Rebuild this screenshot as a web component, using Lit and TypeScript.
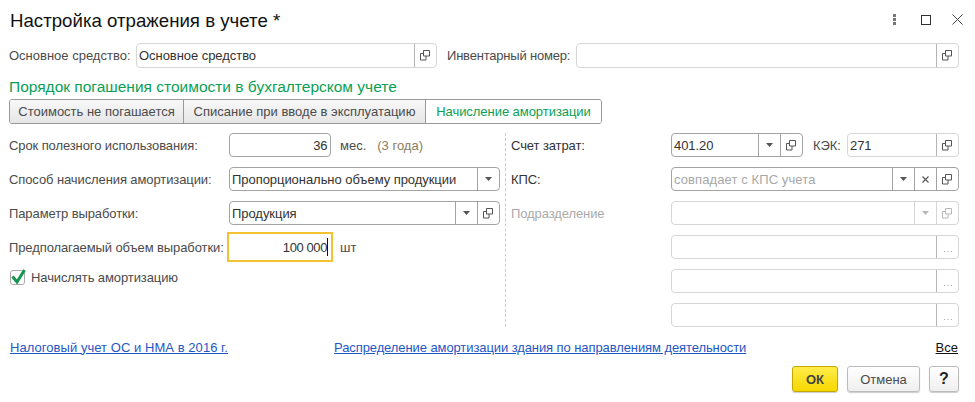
import { LitElement, html, css, svg } from "lit";
import { customElement } from "lit/decorators.js";

type Btn = "open" | "drop" | "clear" | "dots";

const openIcon = svg`<svg class="ic" width="11" height="11" viewBox="0 0 11 11"><path d="M3.5 .5h6v5.5h-6z M.5 3.5h3 M.5 3.5v6.5 M.5 10h5.500v-4" fill="none" stroke="currentColor"/></svg>`;
const dropIcon = svg`<svg class="ic" width="7" height="4" viewBox="0 0 7 4"><path d="M0 0h7L3.500 4z" fill="currentColor"/></svg>`;
const clearIcon = svg`<svg class="ic" width="7" height="7" viewBox="0 0 7 7"><path d="M.5 .5l6 6M6.500 .5l-6 6" fill="none" stroke="currentColor" stroke-width="1.100"/></svg>`;
const dotsIcon = svg`<svg class="ic low" width="8" height="1" viewBox="0 0 8 1"><path d="M0 0h1v1H0zM3.500 0h1v1h-1zM7 0h1v1H7z" fill="currentColor"/></svg>`;
const icons: Record<Btn, unknown> = { open: openIcon, drop: dropIcon, clear: clearIcon, dots: dotsIcon };

@customElement("app-root")
export class AppRoot extends LitElement {
  static styles = css`
    :host {
      display: block;
      width: 975px;
      height: 402px;
      background: #fff;
      overflow: hidden;
      font-family: "Liberation Sans", Arial, sans-serif;
      font-size: 13px;
      color: #4b4b4b;
    }
    .root { display: flex; flex-direction: column; padding: 0 16px 0 9px; }
    .titlebar { display: flex; align-items: center; height: 43px; }
    .title { font-size: 18.67px; color: #111; margin-left: 1px; flex: 1; position: relative; top: -1px; }
    .winbtns { display: flex; align-items: center; margin-right: -4px; height: 10px; position: relative; top: -2px; }
    .winbtns svg { display: block; }
    .wb-dots { margin-right: 25px; }
    .wb-max { margin-right: 21px; }
    .row { display: flex; align-items: center; height: 25px; }
    .lbl { white-space: nowrap; letter-spacing: -0.1px; }
    .l-main { width: 127px; flex: none; letter-spacing: 0; }
    .l-inv { width: 129px; flex: none; margin-left: 10px; letter-spacing: -0.2px; }
    .heading { color: #0a9f55; font-size: 15.5px; height: 31px; line-height: 37px; white-space: nowrap; }
    .tabs {
      display: flex; width: 593px; height: 25px; box-sizing: border-box;
      border: 1px solid #999; border-radius: 3px; overflow: hidden;
    }
    .tab {
      display: flex; align-items: center; justify-content: center; box-sizing: border-box;
      background: linear-gradient(#f8f8f8, #e6e6e6); border-right: 1px solid #999; white-space: nowrap;
    }
    .tab.t1 { width: 174px; }
    .tab.t2 { width: 242px; }
    .tab.on { flex: 1; background: #fff; border-right: 0; color: #0a9f55; letter-spacing: -0.05px; }
    .form { display: flex; margin-top: 9px; }
    .left, .right { display: grid; grid-auto-rows: 24px; row-gap: 10px; align-items: center; }
    .left { width: 496px; grid-template-columns: 220px 271px; }
    .right { width: 454px; box-sizing: border-box; padding-left: 5px; border-left: 1px dashed #ccc; grid-template-columns: 160px 288px; }
    .cell { display: flex; align-items: center; }
    .span { grid-column: 1 / -1; }
    .field {
      position: relative; display: flex; box-sizing: border-box; height: 24px; flex: none;
      background: #fff; border: 1px solid #a3a3a3; border-radius: 4px; color: #333;
    }
    .field.tall { height: 25px; }
    .field.light { border-color: #d6d6d6; }
    .field.light .b { border-left-color: #b5b5b5; }
    .field.faded .b { border-left-color: #d6d6d6; color: #b8b8b8; }
    .field.focus { border-color: transparent; border-radius: 0; }
    .field.focus::after {
      content: ""; position: absolute; inset: -4px -3px; border: 2px solid #f2c230; pointer-events: none;
    }
    .val { flex: 1; min-width: 0; padding: 0 2px; display: flex; align-items: center; white-space: nowrap; letter-spacing: -0.05px; }
    .val.end { justify-content: flex-end; padding-right: 3px; letter-spacing: -0.4px; }
    .focus .val.end { padding-right: 2px; }
    .val.ph { color: #a8a8a8; letter-spacing: 0.1px; }
    .caret { display: inline-block; width: 1px; height: 18px; background: #111; margin-left: 0; }
    .b {
      flex: none; width: 21px; display: flex; align-items: center; justify-content: center;
      border-left: 1px solid #a3a3a3; color: #555;
    }
    .b .low { margin-top: 9px; color: #aaa; }
    .w-main { width: 301px; }
    .w-inv { width: 383px; }
    .w-term { width: 102px; }
    .w-full { width: 271px; }
    .w-acc { width: 132px; }
    .w-kek { width: 112px; }
    .w-r { width: 288px; }
    .unit { margin-left: 9px; }
    .note { margin-left: 11px; color: #8a7d62; }
    .l-kek { flex: none; width: 34px; margin-left: 10px; }
    .dis { color: #aaa; }
    .dark { color: #333; }
    .check { display: flex; align-items: center; gap: 6px; margin-left: 1px; position: relative; top: -4px; letter-spacing: -0.1px; }
    .box {
      position: relative; box-sizing: border-box; width: 15px; height: 15px;
      border: 1px solid #aaa; border-radius: 3px; background: #fff;
    }
    .box svg { position: absolute; left: 0; top: -3px; overflow: visible; }
    .links { display: flex; align-items: center; height: 20px; margin-top: 10px; padding-left: 1px; }
    a { color: #1f57c3; text-decoration: underline; white-space: nowrap; }
    .lk1 { letter-spacing: 0.05px; }
    .lk2 { margin-left: 106px; letter-spacing: -0.09px; }
    .all { margin-left: auto; margin-right: 1px; color: #111; }
    .actions { display: flex; justify-content: flex-end; gap: 9px; margin-top: 9px; }
    .btn {
      display: flex; align-items: center; justify-content: center; box-sizing: border-box; height: 26px;
      border: 1px solid #bcbcbc; border-radius: 3px; background: linear-gradient(#fff, #efefef);
      box-shadow: 0 1px 1px #ccc;
    }
    .ok { width: 46px; background: linear-gradient(#ffec4a, #f6d800); border-color: #c0a800; font-weight: 700; color: #444; }
    .cancel { width: 73px; }
    .help { width: 30px; font-weight: 700; font-size: 16px; color: #222; }
  `;

  private field(cls: string, value: string, buttons: Btn[], valCls = "") {
    return html`<div class="field ${cls}">
      <div class="val ${valCls}">${value}${cls.includes("focus") ? html`<span class="caret"></span>` : ""}</div>
      ${buttons.map((b) => html`<div class="b">${icons[b]}</div>`)}
    </div>`;
  }

  render() {
    return html`<div class="root">
      <div class="titlebar">
        <div class="title">Настройка отражения в учете *</div>
        <div class="winbtns">
          <svg class="wb-dots" width="3" height="11" viewBox="0 0 3 11"><path d="M0 0h3v3H0zM0 4h3v3H0zM0 8h3v3H0z" fill="#777"/></svg>
          <svg class="wb-max" width="10" height="10" viewBox="0 0 10 10"><rect x=".5" y=".5" width="9" height="9" fill="none" stroke="#333"/></svg>
          <svg width="11" height="11" viewBox="0 0 11 11"><path d="M.5 .5l10 10M10.500 .5l-10 10" fill="none" stroke="#444"/></svg>
        </div>
      </div>
      <div class="row">
        <div class="lbl l-main">Основное средство:</div>
        ${this.field("tall light w-main", "Основное средство", ["open"])}
        <div class="lbl l-inv">Инвентарный номер:</div>
        ${this.field("tall light w-inv", "", ["open"])}
      </div>
      <div class="heading">Порядок погашения стоимости в бухгалтерском учете</div>
      <div class="tabs">
        <div class="tab t1">Стоимость не погашается</div>
        <div class="tab t2">Списание при вводе в эксплуатацию</div>
        <div class="tab on">Начисление амортизации</div>
      </div>
      <div class="form">
        <div class="left">
          <div class="lbl">Срок полезного использования:</div>
          <div class="cell">
            ${this.field("w-term", "36", [], "end")}
            <span class="unit">мес.</span><span class="note">(3 года)</span>
          </div>
          <div class="lbl">Способ начисления амортизации:</div>
          <div class="cell">${this.field("w-full", "Пропорционально объему продукции", ["drop"])}</div>
          <div class="lbl">Параметр выработки:</div>
          <div class="cell">${this.field("w-full", "Продукция", ["drop", "open"])}</div>
          <div class="lbl">Предполагаемый объем выработки:</div>
          <div class="cell">
            ${this.field("w-term focus", "100 000", [], "end")}
            <span class="unit">шт</span>
          </div>
          <div class="check span">
            <div class="box">
              <svg width="15" height="16" viewBox="0 0 15 16"><path d="M1.500 8.500L6 14 13.500 2" fill="none" stroke="#15964d" stroke-width="3"/></svg>
            </div>
            <span>Начислять амортизацию</span>
          </div>
          <div></div>
        </div>
        <div class="right">
          <div class="lbl dark">Счет затрат:</div>
          <div class="cell">
            ${this.field("w-acc", "401.20", ["drop", "open"])}
            <span class="lbl l-kek">КЭК:</span>
            ${this.field("light w-kek", "271", ["open"])}
          </div>
          <div class="lbl dark">КПС:</div>
          <div class="cell">${this.field("w-r", "совпадает с КПС учета", ["drop", "clear", "open"], "ph")}</div>
          <div class="lbl dis">Подразделение</div>
          <div class="cell">${this.field("light faded w-r", "", ["drop", "open"])}</div>
          <div></div>
          <div class="cell">${this.field("light w-r", "", ["dots"])}</div>
          <div></div>
          <div class="cell">${this.field("light w-r", "", ["dots"])}</div>
          <div></div>
          <div class="cell">${this.field("light w-r", "", ["dots"])}</div>
        </div>
      </div>
      <div class="links">
        <a class="lk1">Налоговый учет ОС и НМА в 2016 г.</a>
        <a class="lk2">Распределение амортизации здания по направлениям деятельности</a>
        <a class="all">Все</a>
      </div>
      <div class="actions">
        <div class="btn ok">ОК</div>
        <div class="btn cancel">Отмена</div>
        <div class="btn help">?</div>
      </div>
    </div>`;
  }
}
